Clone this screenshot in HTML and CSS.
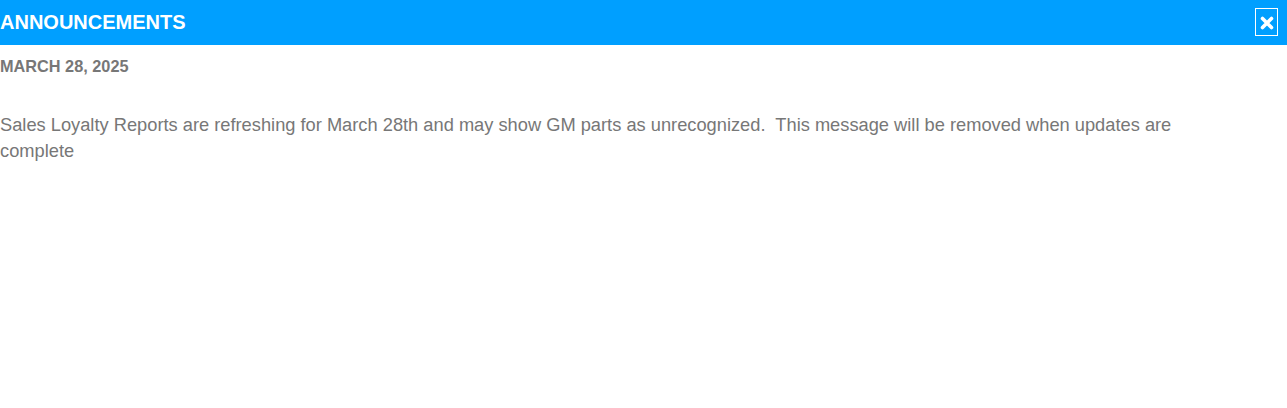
FILE: index.html
```html
<!DOCTYPE html>
<html lang="en">
<head>
    <meta charset="UTF-8">
    <meta name="viewport" content="width=device-width, initial-scale=1.0">
    <title>Announcements</title>
    <link rel="stylesheet" href="styles.css">
</head>
<body>
    <div class="announcements">
        <div class="header">
            <h1>ANNOUNCEMENTS</h1>
            <button type="button" class="close-btn" aria-label="Close">
                <svg width="14" height="14" viewBox="0 0 14 14">
                    <path d="M2.5 2.5 L11.5 11.5 M11.5 2.5 L2.5 11.5" stroke="#fff" stroke-width="3.6" stroke-linecap="round"/>
                </svg>
            </button>
        </div>
        <div class="item">
            <h2 class="date">MARCH 28, 2025</h2>
            <p class="message">Sales Loyalty Reports are refreshing for March 28th and may show GM parts as unrecognized.&nbsp; This message will be removed when updates are complete</p>
        </div>
    </div>
</body>
</html>
```

FILE: styles.css
```css
body {
    margin: 0;
    font-family: "Liberation Sans", Arial, sans-serif;
    background-color: #fff;
}
.header {
    height: 45px;
    background-color: #009fff;
    display: flex;
    align-items: center;
    justify-content: space-between;
    padding-right: 9px;
}
.header h1 {
    margin: 0;
    font-size: 20px;
    line-height: 23px;
    font-weight: bold;
    color: #fff;
}
.close-btn {
    width: 23px;
    height: 28px;
    margin-top: -1px;
    padding: 0;
    border: 1px solid #fff;
    background: transparent;
    display: flex;
    align-items: center;
    justify-content: center;
    cursor: pointer;
}
.close-btn svg {
    display: block;
    margin-top: 1px;
}
.item {
    padding-right: 50px;
}
.date {
    margin: 12px 0 0;
    font-size: 16.3px;
    line-height: 18px;
    font-weight: bold;
    color: #777;
}
.message {
    margin: 37px 0 0;
    font-size: 18.28px;
    line-height: 26px;
    color: #777;
}
```
